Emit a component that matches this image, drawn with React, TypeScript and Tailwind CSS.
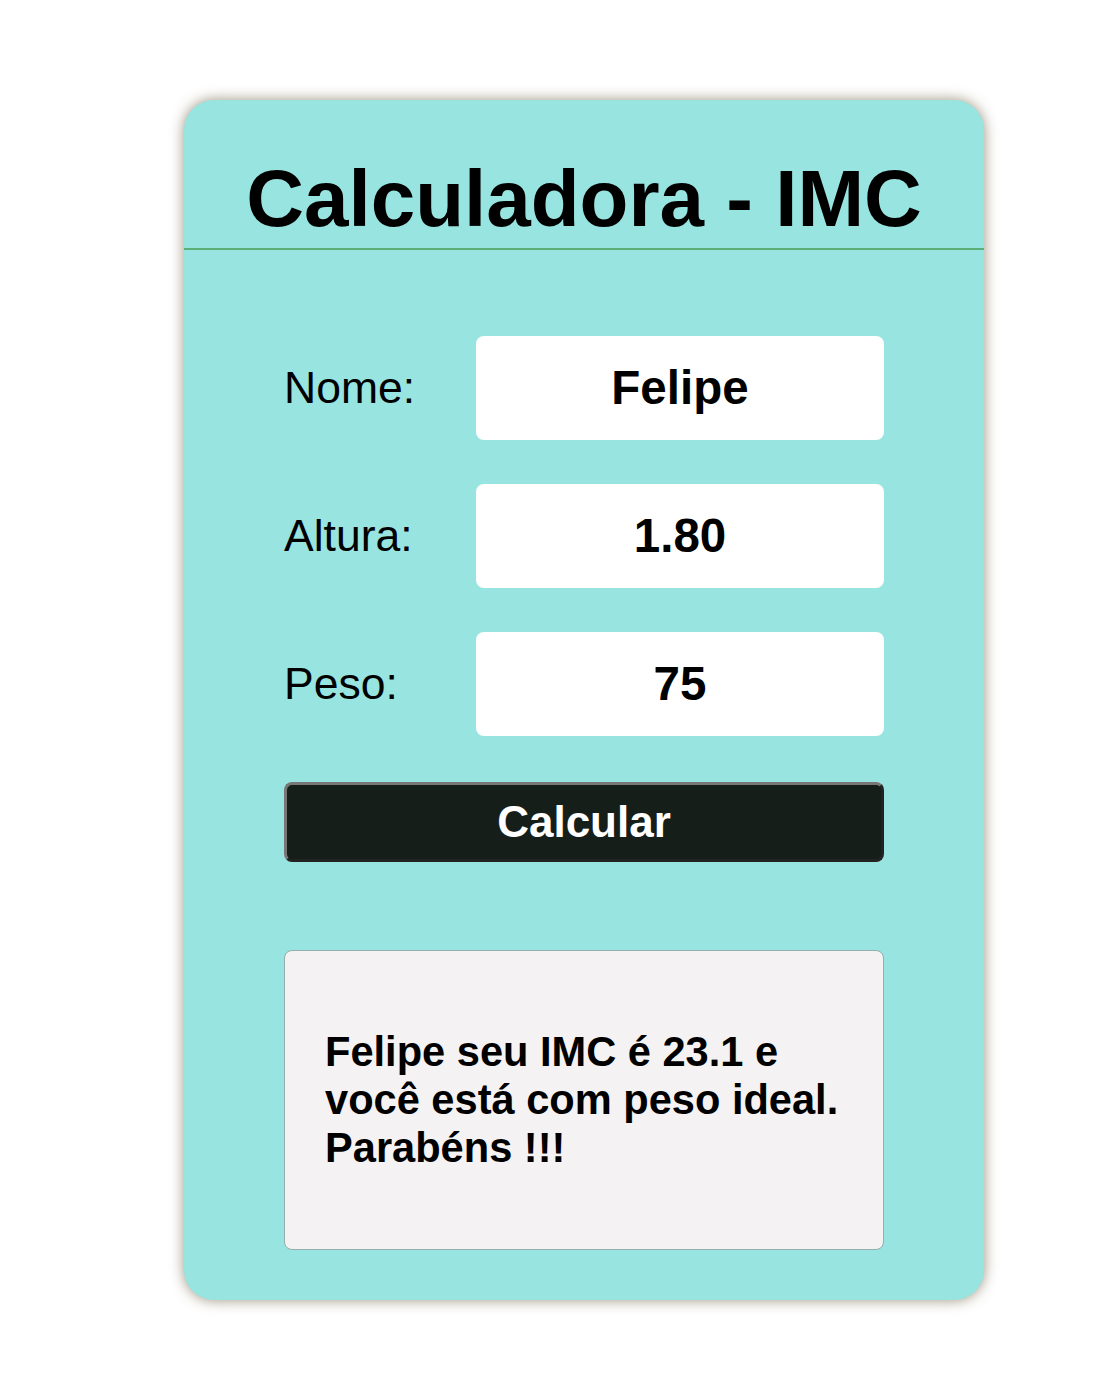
import React from "react";

export default function App() {
  const font = { fontFamily: '"Liberation Sans", Arial, sans-serif' };
  const rows = [
    { label: "Nome:", value: "Felipe" },
    { label: "Altura:", value: "1.80" },
    { label: "Peso:", value: "75" },
  ];
  return (
    <div className="min-h-[1377px] bg-white pt-[100px] pl-[184px]" style={font}>
      <div className="w-[800px] h-[1200px] rounded-[30px] bg-[#98e4e0] shadow-[0_0_14px_rgba(120,110,80,0.75)] flex flex-col">
        <div className="pt-[53px] pb-[3px] border-b-2 border-[#5daf78] text-center">
          <h1 className="text-[80px] font-bold text-black leading-[92px]">Calculadora - IMC</h1>
        </div>
        <div className="px-[100px] pt-[86px] flex flex-col">
          <div className="flex flex-col gap-[44px]">
            {rows.map((r) => (
              <div key={r.label} className="flex items-center">
                <div className="w-[192px] text-[44.5px] text-black">{r.label}</div>
                <div className="w-[408px] h-[104px] bg-white rounded-[8px] flex items-center justify-center text-[47.5px] font-bold text-black">
                  {r.value}
                </div>
              </div>
            ))}
          </div>
          <button className="mt-[46px] h-[80px] w-[600px] rounded-[8px] bg-[#161e1a] border-[3px] border-t-[#777777] border-l-[#777777] border-r-[#222222] border-b-[#222222] text-white text-[44px] font-bold flex items-center justify-center" style={font}>
            Calcular
          </button>
          <div className="mt-[88px] h-[300px] w-[600px] rounded-[8px] bg-[#f4f2f3] border border-[#93aeab] flex items-center px-[40px]">
            <p className="text-[41.6px] font-bold text-black leading-[48px]">
              Felipe seu IMC é 23.1 e você está com peso ideal. Parabéns !!!
            </p>
          </div>
        </div>
      </div>
    </div>
  );
}
